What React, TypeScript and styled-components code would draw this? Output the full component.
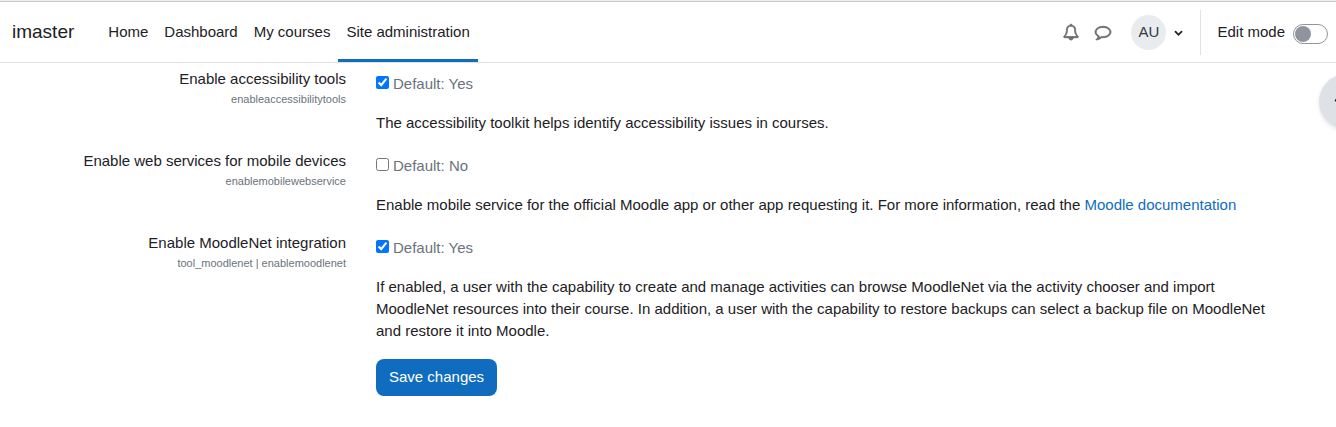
import React from "react";
import styled, { createGlobalStyle } from "styled-components";

const Global = createGlobalStyle`
  *, *::before, *::after { box-sizing: border-box; }
  body {
    margin: 0;
    background: #fff;
    color: #1d2125;
    font-family: "Liberation Sans", Arial, sans-serif;
    font-size: 15px;
    line-height: 22px;
  }
`;

const Page = styled.div`
  position: relative;
  overflow-x: clip;
  border-top: 1px solid #efefef;
`;

const Header = styled.header`
  display: flex;
  height: 62px;
  padding: 0 8px 0 12px;
  border-top: 1px solid #c8c8c8;
  border-bottom: 1px solid #dee2e6;
`;

const Brand = styled.a`
  display: flex;
  align-items: center;
  margin-right: 26px;
  color: inherit;
  font-size: 19px;
  text-decoration: none;
`;

const Nav = styled.nav`
  display: flex;
`;

const NavLink = styled.a<{ $active?: boolean }>`
  display: flex;
  align-items: center;
  padding: 0 8px;
  color: inherit;
  text-decoration: none;
  border-top: 3px solid transparent;
  border-bottom: 3px solid ${(p) => (p.$active ? "#0f6cbf" : "transparent")};
`;

const UserNav = styled.div`
  display: flex;
  align-items: center;
  margin-left: auto;
`;

const Icon = styled.svg<{ $size: number; $weight: number }>`
  flex: none;
  width: ${(p) => p.$size}px;
  height: ${(p) => p.$size}px;
  overflow: visible;
  fill: currentColor;
  stroke: currentColor;
  stroke-width: ${(p) => p.$weight};
`;

const IconButton = styled.button`
  display: flex;
  align-items: center;
  justify-content: center;
  width: 32px;
  height: 32px;
  padding: 0;
  border: 0;
  background: none;
  color: #6a6a6a;
`;

const UserButton = styled.button`
  display: flex;
  align-items: center;
  gap: 8px;
  margin: 0 17px 0 12px;
  padding: 0;
  border: 0;
  background: none;
  color: #1d2125;
  font: inherit;
`;

const Initials = styled.span`
  display: flex;
  align-items: center;
  justify-content: center;
  width: 35px;
  height: 35px;
  border-radius: 50%;
  background: #e9ecef;
  color: #343a40;
`;

const EditMode = styled.label`
  display: flex;
  align-items: center;
  gap: 8px;
  height: 45px;
  padding-left: 16px;
  border-left: 1px solid #dee2e6;
`;

const Switch = styled.input`
  appearance: none;
  display: flex;
  align-items: center;
  width: 35px;
  height: 20px;
  margin: 4px 0 0;
  padding: 0 1px;
  border: 1px solid #8f959e;
  border-radius: 10px;
  background: #fff;

  &::before {
    content: "";
    width: 16px;
    height: 16px;
    border-radius: 50%;
    background: #8f959e;
  }
  &:checked {
    justify-content: flex-end;
  }
`;

const DrawerToggle = styled.button`
  position: absolute;
  top: 73px;
  right: -38px;
  display: flex;
  align-items: center;
  width: 55px;
  height: 55px;
  padding: 0 0 2px 12px;
  border: 0;
  border-radius: 50%;
  background: #dee2e6;
  box-shadow: 0 2px 4px rgba(0, 0, 0, 0.1);
  color: #1d2125;
`;

const Form = styled.form`
  padding: 4px 54px 31px;
`;

const Row = styled.div`
  display: grid;
  grid-template-columns: 25% 75%;
`;

const LabelCell = styled.div`
  padding: 0 15px;
  text-align: right;
`;

const SettingLabel = styled.label`
  display: block;
  line-height: 24px;
`;

const ShortName = styled.span`
  display: block;
  color: #6a737b;
  font-size: 11px;
  line-height: 16px;
`;

const ValueCell = styled.div`
  padding: 6px 15px 0;
`;

const Value = styled.div`
  display: flex;
  gap: 4px;
  color: #6a737b;
`;

const Checkbox = styled.input`
  width: 13px;
  height: 13px;
  margin: 3px 0 0;
`;

const Description = styled.p`
  margin: 17px 0 15px;
`;

const Link = styled.a`
  color: #0f6cbf;
  text-decoration: none;
`;

const Actions = styled.div`
  grid-column: 2;
  padding: 2px 15px 0;
`;

const SaveButton = styled.button`
  padding: 7px 13px 8px;
  border: 0;
  border-radius: 8px;
  background: #0f6cbf;
  color: #fff;
  font: inherit;
`;

const icons = {
  bell: "M912 1696q0-16-16-16-59 0-101.5-42.5t-42.5-101.5q0-16-16-16t-16 16q0 73 51.5 124.5t124.5 51.5q16 0 16-16zm-666-288h1300q-266-300-266-832 0-51-24-105t-69-103-121.5-80.5-169.5-31.5-169.5 31.5-121.5 80.5-69 103-24 105q0 532-266 832zm1482 0q0 52-38 90t-90 38h-448q0 106-75 181t-181 75-181-75-75-181h-448q-52 0-90-38t-38-90q50-42 91-88t85-119.5 74.5-158.5 50-206 19.5-260q0-152 117-282.5t307-158.5q-8-19-8-39 0-40 28-68t68-28 68 28 28 68q0 20-8 39 190 28 307 158.5t117 282.5q0 139 19.5 260t50 206 74.5 158.5 85 119.5 91 88z",
  comment: "M896 384q-204 0-381.5 69.5t-282 187.5-104.5 255q0 112 71.5 213.5t201.5 175.5l87 50-27 96q-24 91-70 172 152-63 275-171l43-38 57 6q69 8 130 8 204 0 381.5-69.5t282-187.5 104.5-255-104.5-255-282-187.5-381.5-69.5zm896 512q0 174-120 321.5t-326 233-450 85.5q-70 0-145-8-198 175-460 242-49 14-114 22h-5q-15 0-27-10.5t-16-27.5v-1q-3-4-.5-12t2-10 4.5-9.5l6-9 7-8.5 8-9q7-8 31-34.5t34.5-38 31-39.5 32.5-51 27-59 26-76q-157-89-247.5-220t-90.5-281q0-174 120-321.5t326-233 450-85.5 450 85.5 326 233 120 321.5z",
  chevronDown: "M1683 808l-742 741q-19 19-45 19t-45-19l-742-741q-19-19-19-45.5t19-45.5l166-165q19-19 45-19t45 19l531 531 531-531q19-19 45-19t45 19l166 165q19 19 19 45.5t-19 45.5z",
  chevronLeft: "M1427 301l-531 531 531 531q19 19 19 45t-19 45l-166 166q-19 19-45 19t-45-19l-742-742q-19-19-19-45t19-45l742-742q19-19 45-19t45 19l166 166q19 19 19 45t-19 45z",
};

interface GlyphProps {
  name: keyof typeof icons;
  size?: number;
  weight?: number;
}

function Glyph({ name, size = 16, weight = 0 }: GlyphProps) {
  return (
    <Icon $size={size} $weight={weight} viewBox="0 0 1792 1792" aria-hidden="true">
      <path d={icons[name]} />
    </Icon>
  );
}

interface SettingProps {
  id: string;
  label: string;
  shortName: string;
  checked: boolean;
  children: React.ReactNode;
}

function Setting({ id, label, shortName, checked, children }: SettingProps) {
  return (
    <Row>
      <LabelCell>
        <SettingLabel htmlFor={id}>{label}</SettingLabel>
        <ShortName>{shortName}</ShortName>
      </LabelCell>
      <ValueCell>
        <Value>
          <Checkbox type="checkbox" id={id} defaultChecked={checked} />
          <span>Default: {checked ? "Yes" : "No"}</span>
        </Value>
        <Description>{children}</Description>
      </ValueCell>
    </Row>
  );
}

export default function App() {
  return (
    <Page>
      <Global />
      <Header>
        <Brand href="#">imaster</Brand>
        <Nav>
          <NavLink href="#">Home</NavLink>
          <NavLink href="#">Dashboard</NavLink>
          <NavLink href="#">My courses</NavLink>
          <NavLink href="#" $active aria-current="page">Site administration</NavLink>
        </Nav>
        <UserNav>
          <IconButton type="button" aria-label="Notifications"><Glyph name="bell" weight={90} /></IconButton>
          <IconButton type="button" aria-label="Messages"><Glyph name="comment" weight={90} /></IconButton>
          <UserButton type="button" aria-label="User menu">
            <Initials>AU</Initials>
            <Glyph name="chevronDown" size={9} />
          </UserButton>
          <EditMode>
            Edit mode
            <Switch type="checkbox" role="switch" />
          </EditMode>
        </UserNav>
      </Header>
      <DrawerToggle type="button" aria-label="Open block drawer"><Glyph name="chevronLeft" /></DrawerToggle>
      <Form onSubmit={(e) => e.preventDefault()}>
        <Setting id="accessibility" label="Enable accessibility tools" shortName="enableaccessibilitytools" checked>
          The accessibility toolkit helps identify accessibility issues in courses.
        </Setting>
        <Setting id="mobile" label="Enable web services for mobile devices" shortName="enablemobilewebservice" checked={false}>
          Enable mobile service for the official Moodle app or other app requesting it. For more information, read the{" "}
          <Link href="#">Moodle documentation</Link>
        </Setting>
        <Setting id="moodlenet" label="Enable MoodleNet integration" shortName="tool_moodlenet | enablemoodlenet" checked>
          If enabled, a user with the capability to create and manage activities can browse MoodleNet via the activity
          chooser and import MoodleNet resources into their course. In addition, a user with the capability to restore
          backups can select a backup file on MoodleNet and restore it into Moodle.
        </Setting>
        <Row>
          <Actions>
            <SaveButton type="submit">Save changes</SaveButton>
          </Actions>
        </Row>
      </Form>
    </Page>
  );
}
